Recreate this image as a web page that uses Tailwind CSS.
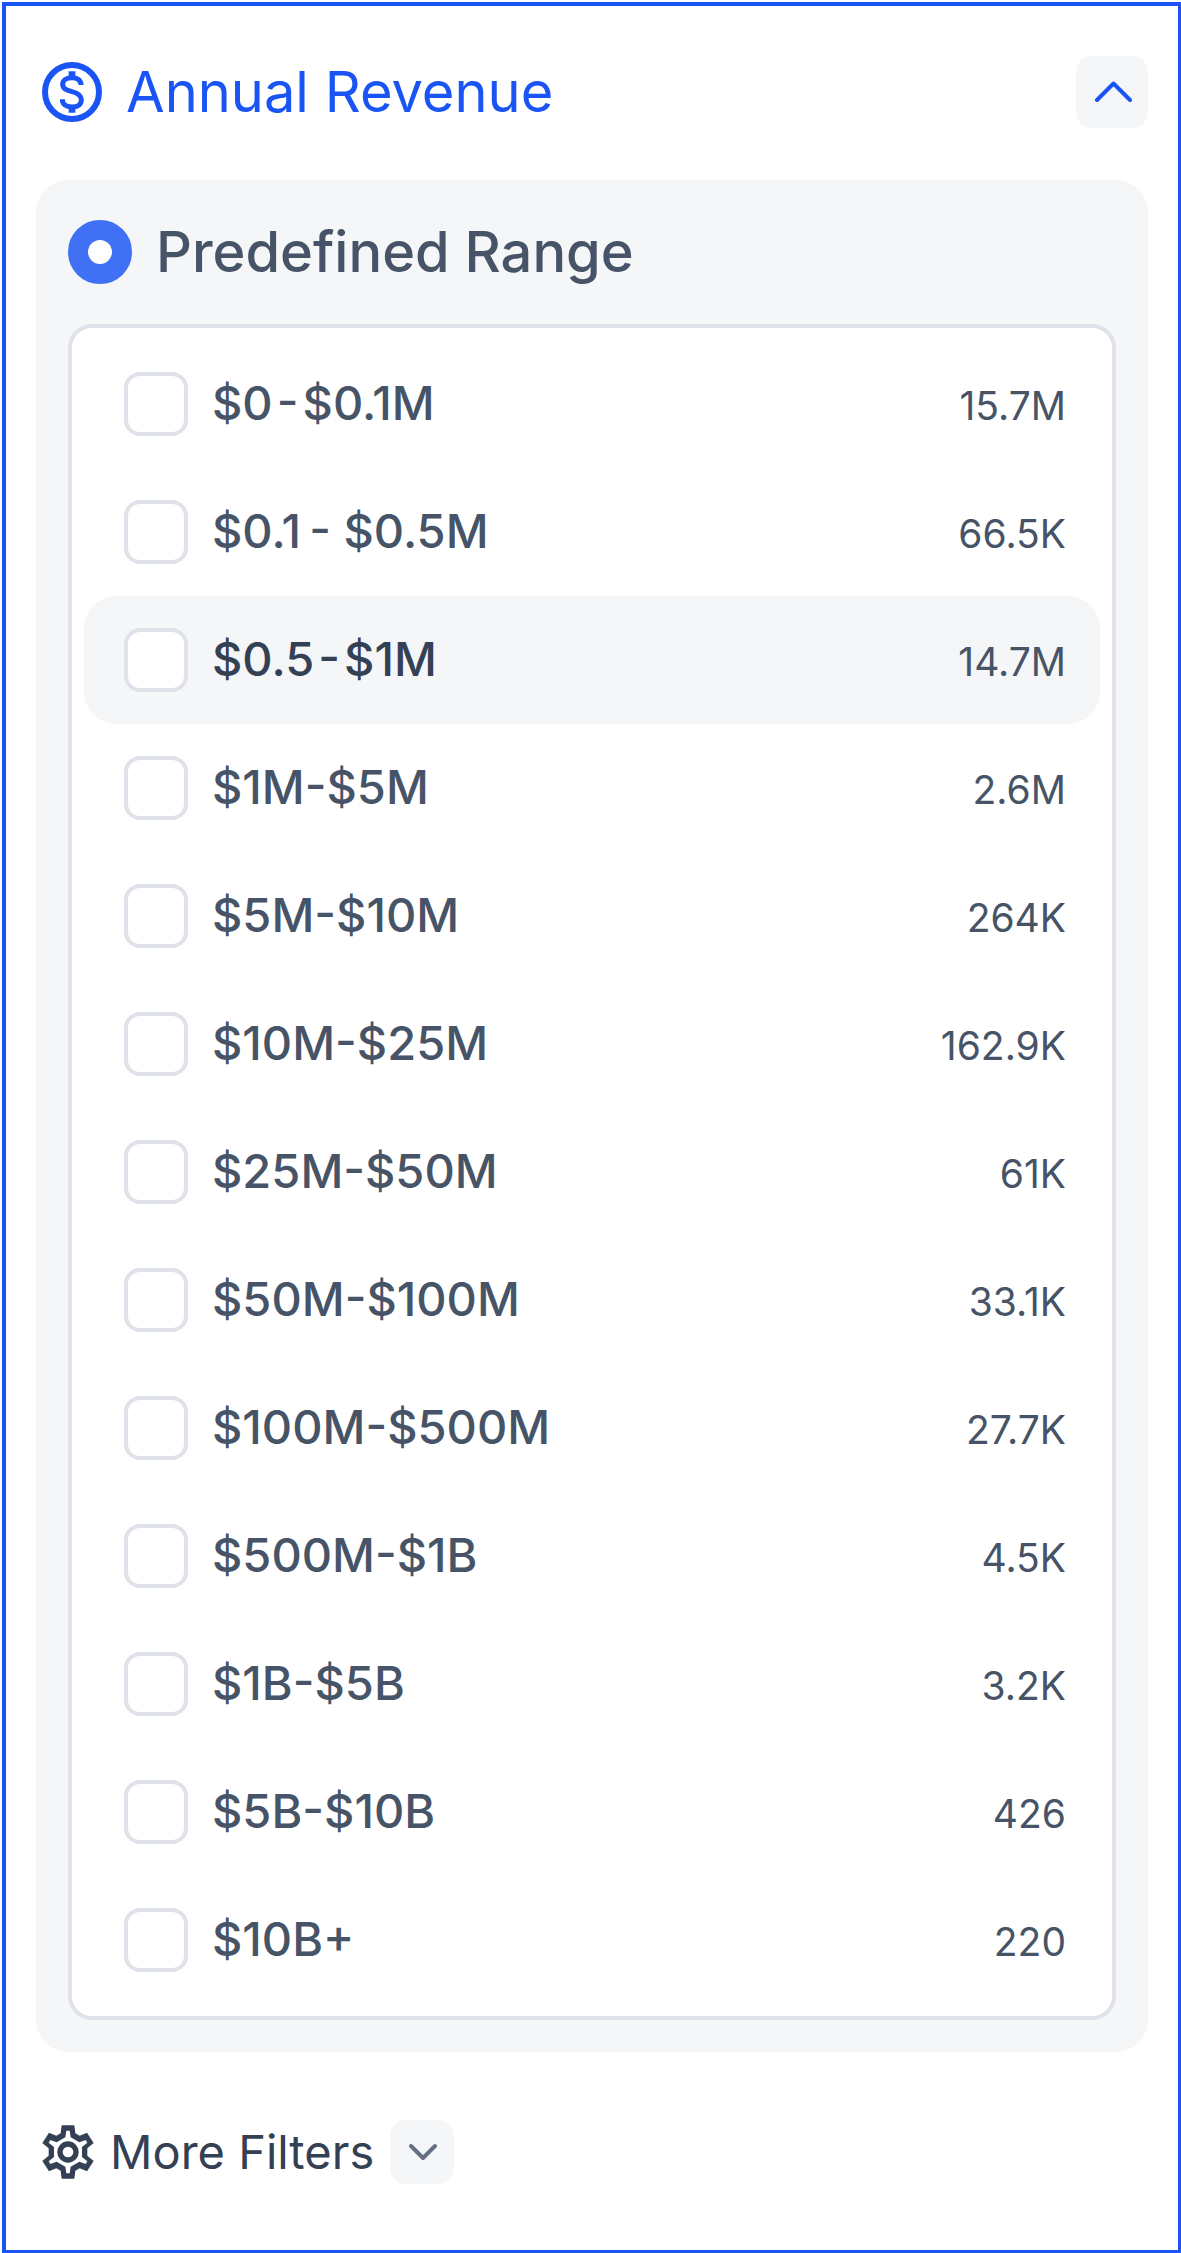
<!DOCTYPE html>
<html lang="en">
<head>
    <meta charset="UTF-8">
    <meta name="viewport" content="width=device-width, initial-scale=1.0">
    <title>Annual Revenue Filter</title>
    <script src="https://cdn.jsdelivr.net/npm/@tailwindcss/browser@4"></script>
    <style>
        body {
            font-family: 'Inter', 'Liberation Sans', sans-serif;
        }
    </style>
</head>
<body class="bg-white pt-0.5 pl-0.5">
    <main class="border-[#1a54f5] border-t-4 border-l-4 border-r-3 border-b-3 px-[30px] pt-[50px] pb-[66px]">
        <header class="flex items-center justify-between pl-1.5 mb-[52px]">
            <div class="flex items-center gap-6 text-[#1a54f5]">
                <svg class="size-[60px]" viewBox="7 12 180 180" fill="none" stroke="currentColor" aria-hidden="true">
                    <circle cx="97" cy="102" r="81" stroke-width="18"/>
                    <path stroke-width="15" d="M124 81C124 66 113 59 97 59C80 59 69 67 69 79C69 92 79 96 97 101C117 106 125 113 125 126C125 139 114 147 97 147C79 147 68 139 68 124"/>
                    <path stroke-width="20" d="M97 40V59M97 146V164"/>
                </svg>
                <h1 class="text-[56px] leading-[72px]">Annual Revenue</h1>
            </div>
            <button type="button" aria-label="Collapse Annual Revenue" class="flex items-center justify-center size-[72px] rounded-2xl bg-[#f4f6f8] text-[#1a54f5]">
                <svg class="size-10" viewBox="0 0 40 40" fill="none" stroke="currentColor" stroke-width="4" stroke-linecap="round" stroke-linejoin="round">
                    <path d="M5 28L21.5 11.5L38 28"/>
                </svg>
            </button>
        </header>

        <section class="rounded-[32px] bg-[#f4f6f8] px-8 pt-10 pb-8">
            <label class="flex items-center gap-6 mb-10 text-[56px] leading-[64px] font-medium text-[#475467]">
                <input type="radio" name="mode" checked class="appearance-none shrink-0 size-16 rounded-full border-20 border-[#4070f4] bg-white">
                Predefined Range
            </label>

            <div id="ranges" class="rounded-3xl border-4 border-[#dfe2e8] bg-white p-3"></div>
        </section>

        <footer class="flex items-center gap-4 pl-1.5 mt-[68px] text-[#344054]">
            <svg class="w-[52px] h-[60px]" viewBox="-78 -90 156 180" fill="currentColor" aria-hidden="true">
                <path fill-rule="evenodd" d="M-19-80H19L22-56L35-49L57-58L77-27L58-11V11L77 27L57 58L35 49L22 56L19 80H-19L-22 56L-35 49L-57 58L-77 27L-58 11V-11L-77-27L-57-58L-35-49L-22-56ZM-5-64L-8-44L-34-29L-53-36L-58-28L-42-15V15L-58 28L-53 36L-34 29L-8 44L-5 64H5L8 44L34 29L53 36L58 28L42 15V-15L58-28L53-36L34-29L8-44L5-64Z"/>
                <circle r="24" fill="none" stroke="currentColor" stroke-width="16"/>
            </svg>
            <span class="text-[47px] leading-[64px]">More Filters</span>
            <button type="button" aria-label="Show more filters" class="flex items-center justify-center size-16 rounded-2xl bg-[#f4f6f8] text-[#667085]">
                <svg class="size-10" viewBox="0 0 40 40" fill="none" stroke="currentColor" stroke-width="4" stroke-linecap="round" stroke-linejoin="round">
                    <path d="M9 14L21 26L33 14"/>
                </svg>
            </button>
        </footer>
    </main>

    <script>
        // Revenue ranges with the number of companies in each
        const ranges = [
            ['$0&hairsp;-&hairsp;$0.1M', '15.7M'],
            ['$0.1&thinsp;- $0.5M', '66.5K'],
            ['$0.5&hairsp;-&hairsp;$1M', '14.7M', true],
            ['$1M-$5M', '2.6M'],
            ['$5M-$10M', '264K'],
            ['$10M-$25M', '162.9K'],
            ['$25M-$50M', '61K'],
            ['$50M-$100M', '33.1K'],
            ['$100M-$500M', '27.7K'],
            ['$500M-$1B', '4.5K'],
            ['$1B-$5B', '3.2K'],
            ['$5B-$10B', '426'],
            ['$10B+', '220']
        ];

        document.getElementById('ranges').innerHTML = ranges.map(([name, count, active]) => `
            <label class="flex items-center gap-6 h-32 pl-10 pr-[34px] rounded-[32px] ${active ? 'bg-[#f4f6f8]' : ''}">
                <input type="checkbox" class="appearance-none shrink-0 size-16 rounded-2xl border-4 border-[#dfe2e8] bg-white">
                <span class="flex flex-1 items-baseline justify-between leading-[64px] text-[#475467]">
                    <span class="text-[47px] font-medium ${active ? 'text-[#344054]' : ''}">${name}</span>
                    <span class="text-[39px]">${count}</span>
                </span>
            </label>
        `).join('');
    </script>
</body>
</html>
